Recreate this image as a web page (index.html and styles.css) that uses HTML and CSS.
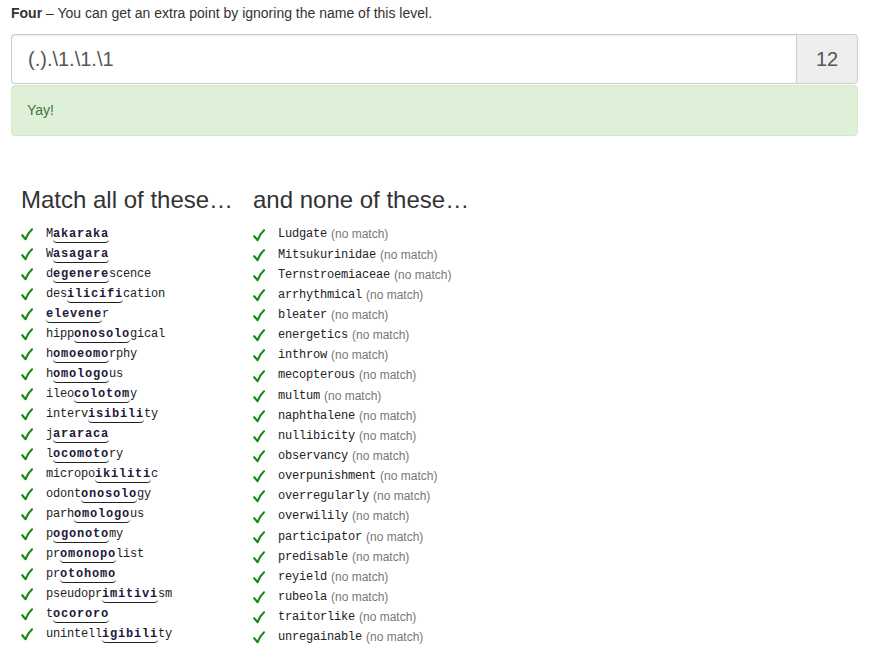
FILE: index.html
```html
<!DOCTYPE html>
<html>
<head>
<meta charset="utf-8">
<link rel="stylesheet" href="styles.css">
</head>
<body>
<div class="page">
  <p class="intro"><b>Four</b> – You can get an extra point by ignoring the name of this level.</p>
  <div class="input-group">
    <div class="field">(.).\1.\1.\1</div>
    <div class="addon">12</div>
  </div>
  <div class="alert">Yay!</div>

  <svg width="0" height="0" class="defs">
    <defs>
      <symbol id="tick" viewBox="0 0 12 13">
        <path d="M1.2 7.2 L4.6 11.2 Q6.5 5.5 11 1.3" fill="none" stroke="#168a16" stroke-width="2.1" stroke-linecap="round" stroke-linejoin="round"/>
      </symbol>
    </defs>
  </svg>

  <div class="columns">
    <div class="col col-match">
      <h2>Match all of these…</h2>
      <ul>
        <li><svg class="ok"><use href="#tick"/></svg><code>M<b>akaraka</b></code></li>
        <li><svg class="ok"><use href="#tick"/></svg><code>W<b>asagara</b></code></li>
        <li><svg class="ok"><use href="#tick"/></svg><code>d<b>egenere</b>scence</code></li>
        <li><svg class="ok"><use href="#tick"/></svg><code>des<b>ilicifi</b>cation</code></li>
        <li><svg class="ok"><use href="#tick"/></svg><code><b>elevene</b>r</code></li>
        <li><svg class="ok"><use href="#tick"/></svg><code>hipp<b>onosolo</b>gical</code></li>
        <li><svg class="ok"><use href="#tick"/></svg><code>h<b>omoeomo</b>rphy</code></li>
        <li><svg class="ok"><use href="#tick"/></svg><code>h<b>omologo</b>us</code></li>
        <li><svg class="ok"><use href="#tick"/></svg><code>ileo<b>colotom</b>y</code></li>
        <li><svg class="ok"><use href="#tick"/></svg><code>interv<b>isibili</b>ty</code></li>
        <li><svg class="ok"><use href="#tick"/></svg><code>j<b>araraca</b></code></li>
        <li><svg class="ok"><use href="#tick"/></svg><code>l<b>ocomoto</b>ry</code></li>
        <li><svg class="ok"><use href="#tick"/></svg><code>micropo<b>ikiliti</b>c</code></li>
        <li><svg class="ok"><use href="#tick"/></svg><code>odont<b>onosolo</b>gy</code></li>
        <li><svg class="ok"><use href="#tick"/></svg><code>parh<b>omologo</b>us</code></li>
        <li><svg class="ok"><use href="#tick"/></svg><code>p<b>ogonoto</b>my</code></li>
        <li><svg class="ok"><use href="#tick"/></svg><code>pr<b>omonopo</b>list</code></li>
        <li><svg class="ok"><use href="#tick"/></svg><code>pr<b>otohomo</b></code></li>
        <li><svg class="ok"><use href="#tick"/></svg><code>pseudopr<b>imitivi</b>sm</code></li>
        <li><svg class="ok"><use href="#tick"/></svg><code>t<b>ocororo</b></code></li>
        <li><svg class="ok"><use href="#tick"/></svg><code>unintell<b>igibili</b>ty</code></li>
      </ul>
    </div>
    <div class="col col-none">
      <h2>and none of these…</h2>
      <ul>
        <li><svg class="ok"><use href="#tick"/></svg><code>Ludgate</code><span class="nm">(no match)</span></li>
        <li><svg class="ok"><use href="#tick"/></svg><code>Mitsukurinidae</code><span class="nm">(no match)</span></li>
        <li><svg class="ok"><use href="#tick"/></svg><code>Ternstroemiaceae</code><span class="nm">(no match)</span></li>
        <li><svg class="ok"><use href="#tick"/></svg><code>arrhythmical</code><span class="nm">(no match)</span></li>
        <li><svg class="ok"><use href="#tick"/></svg><code>bleater</code><span class="nm">(no match)</span></li>
        <li><svg class="ok"><use href="#tick"/></svg><code>energetics</code><span class="nm">(no match)</span></li>
        <li><svg class="ok"><use href="#tick"/></svg><code>inthrow</code><span class="nm">(no match)</span></li>
        <li><svg class="ok"><use href="#tick"/></svg><code>mecopterous</code><span class="nm">(no match)</span></li>
        <li><svg class="ok"><use href="#tick"/></svg><code>multum</code><span class="nm">(no match)</span></li>
        <li><svg class="ok"><use href="#tick"/></svg><code>naphthalene</code><span class="nm">(no match)</span></li>
        <li><svg class="ok"><use href="#tick"/></svg><code>nullibicity</code><span class="nm">(no match)</span></li>
        <li><svg class="ok"><use href="#tick"/></svg><code>observancy</code><span class="nm">(no match)</span></li>
        <li><svg class="ok"><use href="#tick"/></svg><code>overpunishment</code><span class="nm">(no match)</span></li>
        <li><svg class="ok"><use href="#tick"/></svg><code>overregularly</code><span class="nm">(no match)</span></li>
        <li><svg class="ok"><use href="#tick"/></svg><code>overwilily</code><span class="nm">(no match)</span></li>
        <li><svg class="ok"><use href="#tick"/></svg><code>participator</code><span class="nm">(no match)</span></li>
        <li><svg class="ok"><use href="#tick"/></svg><code>predisable</code><span class="nm">(no match)</span></li>
        <li><svg class="ok"><use href="#tick"/></svg><code>reyield</code><span class="nm">(no match)</span></li>
        <li><svg class="ok"><use href="#tick"/></svg><code>rubeola</code><span class="nm">(no match)</span></li>
        <li><svg class="ok"><use href="#tick"/></svg><code>traitorlike</code><span class="nm">(no match)</span></li>
        <li><svg class="ok"><use href="#tick"/></svg><code>unregainable</code><span class="nm">(no match)</span></li>
      </ul>
    </div>
  </div>
</div>
</body>
</html>
```

FILE: styles.css
```css
html, body {
  margin: 0;
  padding: 0;
  background: #fff;
}
body {
  font-family: "Liberation Sans", Arial, sans-serif;
  font-size: 14px;
  line-height: 1.42857;
  color: #333;
}
.page {
  padding: 4px 12px 0 11px;
}
.defs {
  position: absolute;
}
.intro {
  margin: 0 0 10px;
  font-size: 14px;
  color: #333;
}
.intro b {
  font-weight: bold;
}
.input-group {
  display: flex;
  height: 50px;
  box-sizing: border-box;
}
.field {
  flex: 1;
  border: 1px solid #ccc;
  border-right: none;
  border-radius: 4px 0 0 4px;
  box-shadow: inset 0 1px 1px rgba(0,0,0,.075);
  padding: 0 16px;
  font-size: 20px;
  line-height: 48px;
  color: #555;
}
.addon {
  width: 60px;
  border: 1px solid #ccc;
  border-radius: 0 4px 4px 0;
  background: #eee;
  font-size: 20px;
  line-height: 48px;
  text-align: center;
  color: #555;
}
.alert {
  margin-top: 1px;
  background: #dff0d8;
  border: 1px solid #d6e9c6;
  border-radius: 4px;
  color: #3c763d;
  padding: 15px 15px;
  line-height: 19px;
}
.columns {
  display: flex;
  margin-top: 49px;
  padding-left: 10px;
}
.col-match {
  width: 232px;
}
h2 {
  margin: 0 0 10px;
  font-size: 24px;
  font-weight: normal;
  line-height: 30px;
  color: #333;
}
ul {
  list-style: none;
  margin: 0;
  padding: 0;
}
li {
  height: 20px;
  white-space: nowrap;
  display: flex;
  align-items: center;
}
.col-none li {
  height: 20.15px;
}
.ok {
  flex: none;
  width: 12px;
  height: 13px;
  margin-right: 13px;
}
code {
  font-family: "Liberation Mono", "Courier New", monospace;
  font-size: 12px;
  letter-spacing: -0.2px;
  color: #222;
  white-space: pre;
}
code b {
  font-weight: bold;
  letter-spacing: 0.8px;
  color: #1d1a3a;
  border-bottom: 1px solid #222;
  border-radius: 0 0 4px 4px;
  padding-bottom: 1px;
}
.nm {
  font-size: 12px;
  color: #777;
  margin-left: 4px;
}
```
